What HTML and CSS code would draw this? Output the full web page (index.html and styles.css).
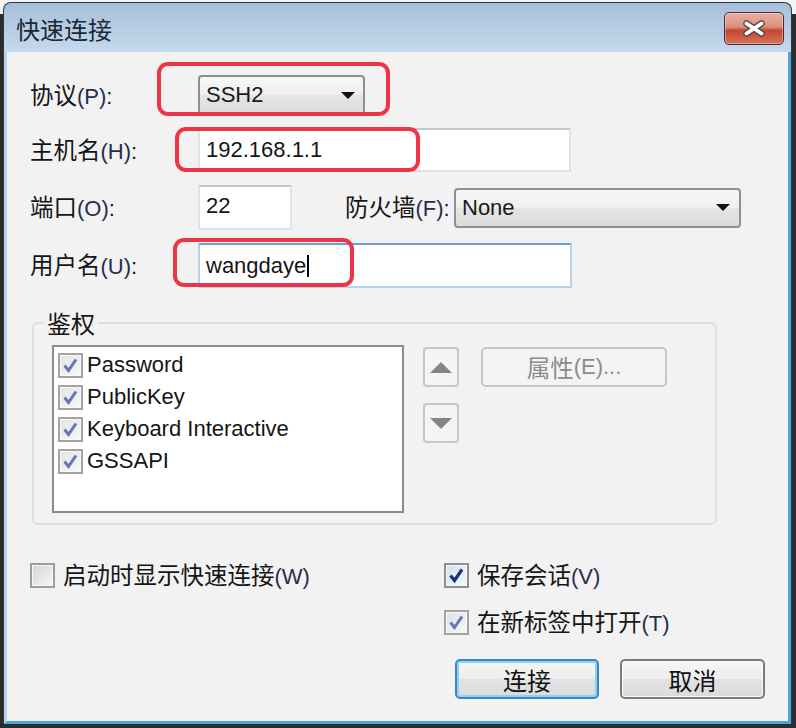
FILE: index.html
```html
<!DOCTYPE html>
<html lang="zh-CN">
<head>
<meta charset="utf-8">
<title>快速连接</title>
<link rel="stylesheet" href="styles.css">
</head>
<body>
<div class="window">
  <div class="titlebar">
    <span class="title zh">快速连接</span>
    <div class="close">
      <svg width="24" height="17" viewBox="0 0 24 17">
        <path d="M4.5 3.5 L19.5 13.5 M19.5 3.5 L4.5 13.5" stroke="#5a4848" stroke-width="6.5" stroke-linecap="round" fill="none"/>
        <path d="M4.5 3.5 L19.5 13.5 M19.5 3.5 L4.5 13.5" stroke="#ffffff" stroke-width="3.8" stroke-linecap="round" fill="none"/>
      </svg>
    </div>
  </div>
  <div class="body">
    <div class="form">
      <div class="row r1">
        <div class="label"><span class="zh">协议</span><span class="key">(P)</span>:</div>
        <div class="field">
          <div class="combo combo-proto"><span>SSH2</span>
            <svg width="14" height="7" viewBox="0 0 14 7"><polygon points="0,0 14,0 7,7" fill="#111"/></svg>
          </div>
          <div class="mark mark-proto"></div>
        </div>
      </div>
      <div class="row r2">
        <div class="label"><span class="zh">主机名</span><span class="key">(H)</span>:</div>
        <div class="field">
          <div class="input input-host">192.168.1.1</div>
          <div class="mark mark-host"></div>
        </div>
      </div>
      <div class="row r3">
        <div class="label"><span class="zh">端口</span><span class="key">(O)</span>:</div>
        <div class="input input-port">22</div>
        <div class="label label-fw"><span class="zh">防火墙</span><span class="key">(F)</span>:</div>
        <div class="combo combo-fw"><span>None</span>
          <svg width="14" height="7" viewBox="0 0 14 7"><polygon points="0,0 14,0 7,7" fill="#111"/></svg>
        </div>
      </div>
      <div class="row r4">
        <div class="label"><span class="zh">用户名</span><span class="key">(U)</span>:</div>
        <div class="field">
          <div class="input input-user focused">wangdaye<span class="caret"></span></div>
          <div class="mark mark-user"></div>
        </div>
      </div>
    </div>

    <div class="group">
      <div class="group-title zh">鉴权</div>
      <div class="group-body">
        <div class="list">
          <div class="item"><span class="cb cb-gray"><svg width="21" height="21" viewBox="0 0 21 21"><path d="M4.5 10.5 L8.5 15.5 L16 4.5" fill="none" stroke-width="3"/></svg></span><span class="text">Password</span></div>
          <div class="item"><span class="cb cb-gray"><svg width="21" height="21" viewBox="0 0 21 21"><path d="M4.5 10.5 L8.5 15.5 L16 4.5" fill="none" stroke-width="3"/></svg></span><span class="text">PublicKey</span></div>
          <div class="item"><span class="cb cb-gray"><svg width="21" height="21" viewBox="0 0 21 21"><path d="M4.5 10.5 L8.5 15.5 L16 4.5" fill="none" stroke-width="3"/></svg></span><span class="text">Keyboard Interactive</span></div>
          <div class="item"><span class="cb cb-gray"><svg width="21" height="21" viewBox="0 0 21 21"><path d="M4.5 10.5 L8.5 15.5 L16 4.5" fill="none" stroke-width="3"/></svg></span><span class="text">GSSAPI</span></div>
        </div>
        <div class="arrows">
          <div class="arrow-btn"><svg width="22" height="11" viewBox="0 0 22 11"><polygon points="0,11 11,0 22,11" fill="#858585"/></svg></div>
          <div class="arrow-btn"><svg width="22" height="11" viewBox="0 0 22 11"><polygon points="0,0 22,0 11,11" fill="#858585"/></svg></div>
        </div>
        <div class="props"><span class="zh">属性</span>(E)...</div>
      </div>
    </div>

    <div class="bottom">
      <div class="col-left">
        <div class="check-row"><span class="cb cb-empty"></span><span class="text"><span class="zh">启动时显示快速连接</span><span class="key">(W)</span></span></div>
      </div>
      <div class="col-right">
        <div class="check-row"><span class="cb cb-dark"><svg width="21" height="21" viewBox="0 0 21 21"><path d="M4.5 10.5 L8.5 15.5 L16 4.5" fill="none" stroke-width="3.2"/></svg></span><span class="text"><span class="zh">保存会话</span><span class="key">(V)</span></span></div>
        <div class="check-row"><span class="cb cb-gray"><svg width="21" height="21" viewBox="0 0 21 21"><path d="M4.5 10.5 L8.5 15.5 L16 4.5" fill="none" stroke-width="3"/></svg></span><span class="text"><span class="zh">在新标签中打开</span><span class="key">(T)</span></span></div>
        <div class="buttons">
          <div class="btn btn-default zh">连接</div>
          <div class="btn zh">取消</div>
        </div>
      </div>
    </div>
  </div>
</div>
</body>
</html>
```

FILE: styles.css
```css
* { box-sizing: border-box; }
html, body { margin: 0; padding: 0; }
body {
  width: 796px;
  height: 728px;
  overflow: hidden;
  background: linear-gradient(#f4f4f4 0, #f4f4f4 14px, #2c2c2c 14px);
  font-family: "Liberation Sans", "Noto Sans CJK SC", sans-serif;
  font-size: 22px;
  color: #151515;
}
.zh { font-family: "Noto Sans CJK SC", sans-serif; font-size: 23.5px; }
.key { color: #272d4a; }

.window {
  margin: 2px 4px 0 3px;
  height: 722px;
  border: 1px solid #2f3842;
  border-bottom: none;
  border-radius: 8px 8px 0 0;
  background: linear-gradient(#a6bfd9, #c6daee 50px, #bcd3ea);
  display: flex;
  flex-direction: column;
  overflow: hidden;
}
.titlebar {
  height: 49px;
  flex: none;
  display: flex;
  align-items: flex-start;
  justify-content: space-between;
  padding: 0 7px 0 12px;
}
.title {
  margin-top: 3px;
  line-height: 46px;
  font-size: 24px;
  color: #1b2836;
}
.close {
  margin-top: 9px;
  width: 60px;
  height: 33px;
  border: 1px solid #4a2a30;
  border-radius: 5px;
  background: linear-gradient(#eab0a3, #dc8f7d 45%, #c4452d 56%, #d7745d);
  box-shadow: inset 0 0 0 1px rgba(255, 255, 255, 0.35);
  display: flex;
  align-items: center;
  justify-content: center;
}

.body {
  flex: 1;
  background: #f2f2f2;
  border-left: 3px solid #b9d1e9;
  border-right: 3px solid #4aa6dc;
  border-bottom: 3px solid #4aa6dc;
  padding: 23px 0 0 23px;
}

.form { display: flex; flex-direction: column; gap: 13px; }
.row { display: flex; align-items: center; }
.r1 { height: 40px; }
.r2 { height: 44px; }
.r3, .r4 { height: 45px; }
.label { width: 168px; flex: none; line-height: 28px; white-space: nowrap; }
.label-fw { width: 109px; margin-left: 53px; }
.field { position: relative; }

.combo {
  height: 40px;
  border: 2px solid #8e8f90;
  border-radius: 4px;
  background: linear-gradient(#f7f7f7, #efefef 50%, #e5e5e5 50%, #dcdcdc);
  display: flex;
  align-items: center;
  justify-content: space-between;
  padding: 0 8px 0 6px;
  color: #1a1a1a;
}
.combo-proto { width: 167px; }
.combo-fw { width: 287px; padding-right: 9px; }

.input {
  height: 100%;
  background: #fff;
  border: 2px solid #dfe3e8;
  border-top-color: #c3c6cb;
  border-radius: 2px;
  display: flex;
  align-items: center;
  padding-left: 6px;
  color: #151515;
}
.input-host { width: 373px; height: 44px; }
.input-port { width: 94px; height: 45px; padding-bottom: 4px; }
.input-user { width: 374px; height: 45px; }
.focused { border-color: #b6d3ee; border-top-color: #6d9fcf; }
.caret {
  display: inline-block;
  width: 2px;
  height: 22px;
  background: #000;
  margin-left: 1px;
}

.mark {
  position: absolute;
  border: 4px solid #ee3545;
  border-radius: 11px;
  pointer-events: none;
}
.mark-proto { left: -41px; top: -13px; width: 233px; height: 54px; }
.mark-host { left: -23px; top: -1px; width: 245px; height: 45px; }
.mark-user { left: -25px; top: -5px; width: 181px; height: 49px; }

.group {
  margin: 34px 0 0 2px;
  width: 685px;
  border: 2px solid #d8dfe6;
  border-radius: 6px;
  padding: 0 18px 10px;
}
.group-title {
  display: table;
  margin: -15px 0 0 -8px;
  padding: 0 3px;
  background: #f2f2f2;
  line-height: 28px;
  font-size: 24px;
}
.group-body { display: flex; align-items: flex-start; margin-top: 8px; }
.list {
  width: 352px;
  height: 168px;
  flex: none;
  background: #fff;
  border: 2px solid #878b92;
  padding: 2px 0 0 4px;
}
.item { display: flex; align-items: center; height: 32px; }
.item .text { margin-left: 4px; line-height: 28px; white-space: nowrap; }

.cb {
  width: 25px;
  height: 25px;
  flex: none;
  border: 2px solid #a3a3a3;
  box-shadow: inset 0 0 0 1px #f8f8f8;
  background: linear-gradient(135deg, #dadada, #f6f6f6);
  display: flex;
  align-items: center;
  justify-content: center;
}
.cb-gray { background: linear-gradient(135deg, #e2e2e2, #f7f7f7); }
.cb-gray svg path { stroke: #6177b6; }
.cb-dark { border-color: #8e8f8f; background: linear-gradient(135deg, #d3e1f1, #f4f8fc); }
.cb-dark svg path { stroke: #1b3379; }
.cb-empty { border-color: #9d9d9d; background: linear-gradient(135deg, #d3d3d3, #f7f7f7); }

.arrows { display: flex; flex-direction: column; gap: 16px; margin: 2px 0 0 19px; }
.arrow-btn {
  width: 36px;
  height: 40px;
  border: 2px solid #c7c7c7;
  border-radius: 4px;
  background: #f4f4f4;
  display: flex;
  align-items: center;
  justify-content: center;
}
.props {
  margin: 2px 0 0 22px;
  width: 186px;
  height: 40px;
  border: 2px solid #c6c6c6;
  border-radius: 5px;
  background: #f4f4f4;
  color: #8b8b8b;
  display: flex;
  align-items: center;
  justify-content: center;
  white-space: nowrap;
}

.bottom { display: flex; margin-top: 38px; }
.col-left { width: 414px; flex: none; }
.check-row { display: flex; align-items: center; height: 25px; }
.check-row .text { margin-left: 8px; line-height: 28px; white-space: nowrap; }
.col-right .check-row + .check-row { margin-top: 22px; }
.buttons { display: flex; gap: 21px; margin: 24px 0 0 11px; }
.btn {
  width: 144px;
  height: 40px;
  border: 2px solid #7a7a7a;
  border-radius: 5px;
  background: linear-gradient(#f6f6f6, #eeeeee 50%, #e3e3e3 50%, #dadada);
  box-shadow: inset 0 0 0 1px #fbfbfb;
  display: flex;
  align-items: center;
  justify-content: center;
  font-size: 24px;
  color: #111;
}
.btn + .btn { width: 145px; }
.btn-default {
  border-color: #3a86c6;
  box-shadow: inset 0 0 0 2px #8fd0f3;
}
```
